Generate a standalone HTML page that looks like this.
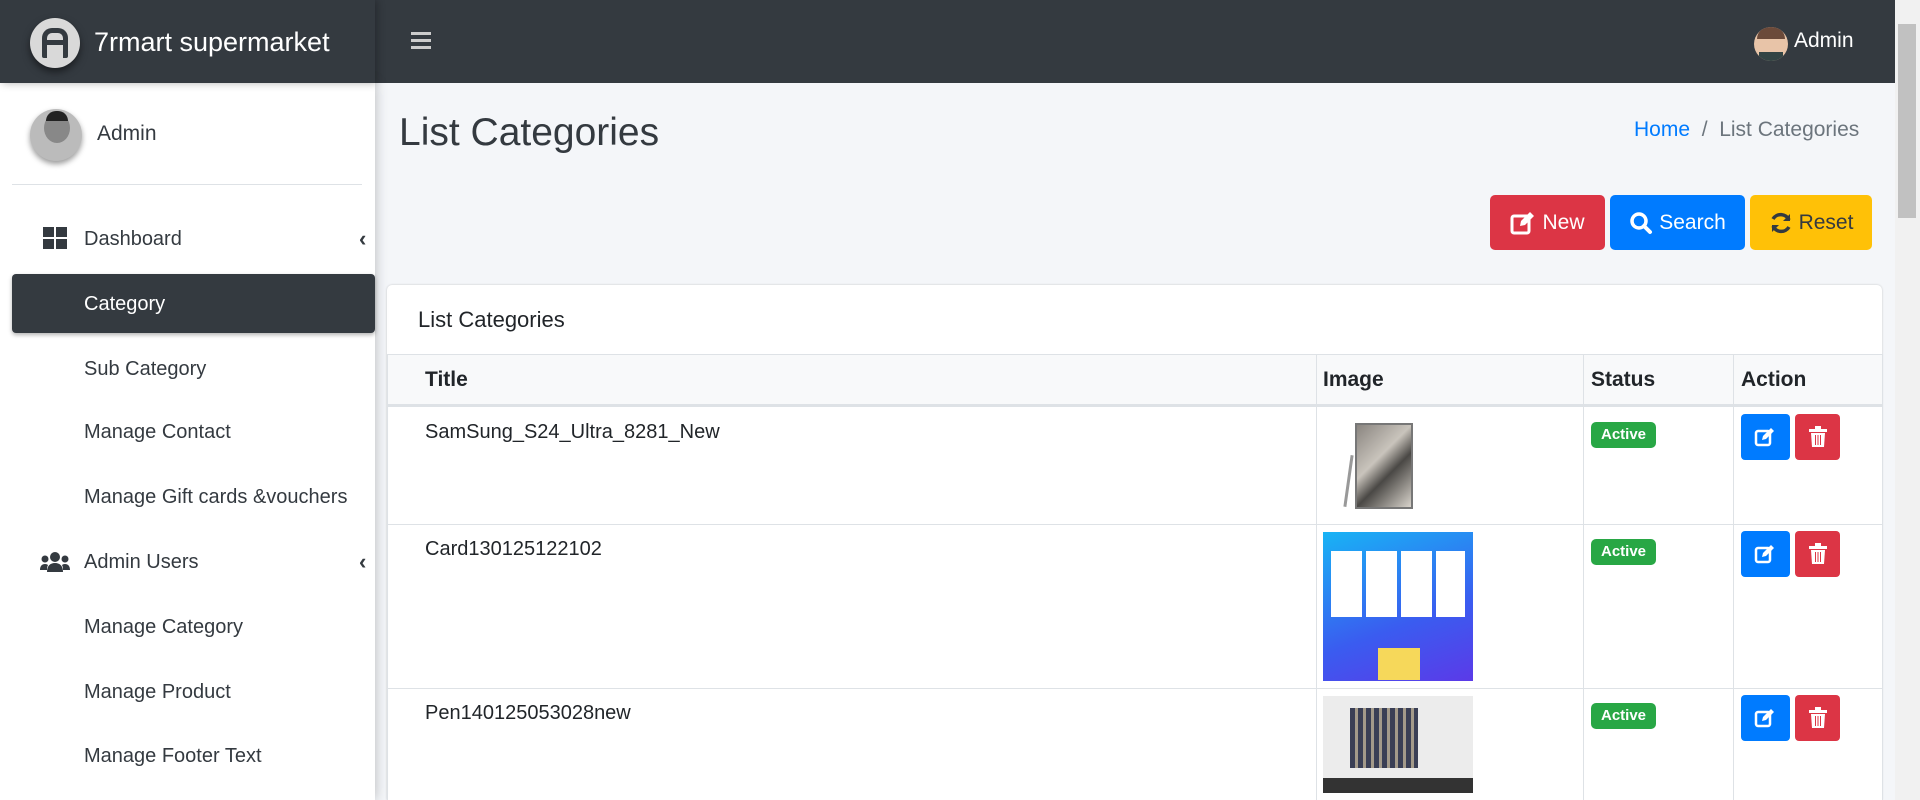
<!DOCTYPE html>
<html style="overflow:hidden;width:1920px;height:800px"><head><meta charset="utf-8"><style>
*{box-sizing:border-box;margin:0;padding:0}
body{width:1920px;height:800px;overflow:hidden;background:#f4f6f9;font-family:"Liberation Sans",sans-serif;color:#212529;position:relative}
.abs{position:absolute}
.nav{left:0;top:0;width:1895px;height:83px;background:#343a40}
.side{left:0;top:83px;width:375px;height:717px;background:#fff;box-shadow:0 0 12px rgba(0,0,0,.25)}
.brandbar{left:0;top:0;width:375px;height:83px;background:#343a40;box-shadow:2px 0 8px rgba(0,0,0,.3)}
.mi{position:absolute;left:84px;font-size:20px;color:#343a40;line-height:24px}
.btn{position:absolute;top:195px;height:55px;border-radius:5px;color:#fff;font-size:21px;display:flex;align-items:center;justify-content:center;gap:6px}
.th{position:absolute;top:354px;height:51px;font-weight:bold;font-size:21px;line-height:51px}
.vl{position:absolute;width:1px;background:#dee2e6}
.hl{position:absolute;height:1px;background:#dee2e6;left:387px;width:1495px}
.badge{position:absolute;left:1591px;width:65px;height:26px;background:#28a745;color:#fff;border-radius:5px;font-weight:bold;font-size:15px;text-align:center;line-height:26px}
.eb{position:absolute;left:1741px;width:49px;height:46px;background:#007bff;border-radius:4px}
.db{position:absolute;left:1795px;width:45px;height:46px;background:#dc3545;border-radius:4px}
.rt{position:absolute;left:425px;font-size:20px}
</style></head><body>
<div class="abs nav"></div>
<div class="abs" style="left:387px;top:285px;width:1495px;height:515px;background:#fff;border-radius:5px 5px 0 0;box-shadow:0 0 2px rgba(0,0,0,.2)"></div>
<div class="abs side"></div>
<div class="abs brandbar"></div>
<div class="abs" style="left:30px;top:18px;width:50px;height:50px;border-radius:50%;background:#d9d9d9;box-shadow:0 4px 8px rgba(0,0,0,.5)"></div>
<div class="abs" style="left:42px;top:28px;width:26px;height:30px;border:5px solid #343a40;border-radius:10px 10px 2px 2px;border-bottom:none"></div>
<div class="abs" style="left:45px;top:40px;width:20px;height:5px;background:#343a40"></div>
<div class="abs" style="left:94px;top:27px;font-size:27px;color:#fff">7rmart supermarket</div>
<div class="abs" style="left:411px;top:32px;width:20px;height:3px;background:#ccc;box-shadow:0 7px 0 #ccc,0 14px 0 #ccc"></div>
<div class="abs" style="left:1754px;top:27px;width:34px;height:34px;border-radius:50%;background:#e8c4a8;overflow:hidden"><div style="position:absolute;top:0;left:3px;width:28px;height:12px;background:#6b4a3a;border-radius:14px 14px 0 0"></div><div style="position:absolute;bottom:0;left:5px;width:24px;height:9px;background:#344"></div></div>
<div class="abs" style="left:1794px;top:29px;font-size:21px;color:#fff">Admin</div>
<div class="abs" style="left:1895px;top:0;width:25px;height:800px;background:#f1f1f1"></div>
<div class="abs" style="left:1898px;top:24px;width:18px;height:194px;background:#c1c1c1"></div>

<div class="abs" style="left:30px;top:109px;width:52px;height:52px;border-radius:50%;background:#bbb;box-shadow:0 3px 6px rgba(0,0,0,.4);overflow:hidden"><div style="position:absolute;left:14px;top:4px;width:26px;height:30px;border-radius:50%;background:#888"></div><div style="position:absolute;left:16px;top:2px;width:22px;height:10px;background:#222;border-radius:10px 10px 0 0"></div></div>
<div class="abs" style="left:97px;top:122px;font-size:21px;color:#343a40">Admin</div>
<div class="abs" style="left:12px;top:184px;width:350px;height:1px;background:#dee2e6"></div>

<svg class="abs" style="left:43px;top:227px" width="24" height="22"><rect x="0" y="0" width="11" height="10" fill="#343a40"/><rect x="13" y="0" width="11" height="10" fill="#343a40"/><rect x="0" y="12" width="11" height="10" fill="#343a40"/><rect x="13" y="12" width="11" height="10" fill="#343a40"/></svg>
<div class="mi" style="top:227px">Dashboard</div>
<div class="abs" style="left:359px;top:226px;font-size:22px;font-weight:bold;color:#343a40">&#8249;</div>
<div class="abs" style="left:12px;top:274px;width:363px;height:59px;background:#343a40;border-radius:4px;box-shadow:0 2px 4px rgba(0,0,0,.3)"></div>
<div class="mi" style="top:292px;color:#fff">Category</div>
<div class="mi" style="top:357px">Sub Category</div>
<div class="mi" style="top:420px">Manage Contact</div>
<div class="mi" style="top:485px">Manage Gift cards &amp;vouchers</div>
<svg class="abs" style="left:40px;top:551px" width="30" height="22" fill="#343a40"><circle cx="15" cy="6" r="5"/><circle cx="5" cy="8" r="3.5"/><circle cx="25" cy="8" r="3.5"/><path d="M7 21c0-6 3-9 8-9s8 3 8 9z"/><path d="M0 19c0-4 2-6 5-6 2 0 3 1 3 1-1 2-1 3-1 5z"/><path d="M30 19c0-4-2-6-5-6-2 0-3 1-3 1 1 2 1 3 1 5z"/></svg>
<div class="mi" style="top:550px">Admin Users</div>
<div class="abs" style="left:359px;top:549px;font-size:22px;font-weight:bold;color:#343a40">&#8249;</div>
<div class="mi" style="top:615px">Manage Category</div>
<div class="mi" style="top:680px">Manage Product</div>
<div class="mi" style="top:744px">Manage Footer Text</div>

<div class="abs" style="left:399px;top:111px;font-size:39px;color:#343a40">List Categories</div>
<div class="abs" style="left:1634px;top:118px;font-size:21px;color:#6c757d"><span style="color:#007bff">Home</span> &nbsp;/&nbsp; List Categories</div>

<div class="btn" style="left:1490px;width:115px;background:#dc3545"><svg width="26" height="24" viewBox="0 0 26 24"><rect x="2" y="5" width="17" height="17" rx="2" fill="none" stroke="#fff" stroke-width="3"/><path d="M10 15l1-5 9-9 4 4-9 9z" fill="#fff"/></svg>New</div>
<div class="btn" style="left:1610px;width:135px;background:#007bff"><svg width="24" height="24"><circle cx="10" cy="10" r="7" fill="none" stroke="#fff" stroke-width="3.5"/><path d="M15 15l6 6" stroke="#fff" stroke-width="4" stroke-linecap="round"/></svg>Search</div>
<div class="btn" style="left:1750px;width:122px;background:#ffc107;color:#343a40"><svg width="24" height="24" viewBox="0 0 24 24" fill="none" stroke="#343a40" stroke-width="3.5"><path d="M20 9A9 9 0 0 0 4 8"/><path d="M4 15a9 9 0 0 0 16 1"/><path d="M21 3v7h-7" stroke-width="0" fill="#343a40"/><path d="M3 21v-7h7" stroke-width="0" fill="#343a40"/></svg>Reset</div>

<div class="abs" style="left:418px;top:307px;font-size:22px;color:#212529">List Categories</div>
<div class="abs" style="left:387px;top:354px;width:1495px;height:51px;background:#f8f9fa"></div>
<div class="hl" style="top:354px"></div>
<div class="hl" style="top:404px;height:3px"></div>
<div class="hl" style="top:524px"></div>
<div class="hl" style="top:688px"></div>
<div class="vl" style="left:387px;top:354px;height:446px"></div>
<div class="vl" style="left:1316px;top:354px;height:446px"></div>
<div class="vl" style="left:1583px;top:354px;height:446px"></div>
<div class="vl" style="left:1733px;top:354px;height:446px"></div>
<div class="vl" style="left:1882px;top:354px;height:446px"></div>
<div class="th" style="left:425px">Title</div>
<div class="th" style="left:1323px">Image</div>
<div class="th" style="left:1591px">Status</div>
<div class="th" style="left:1741px">Action</div>

<div class="rt" style="top:421px">SamSung_S24_Ultra_8281_New</div>
<div class="rt" style="top:538px">Card130125122102</div>
<div class="rt" style="top:702px">Pen140125053028new</div>

<div class="abs" style="left:1355px;top:423px;width:58px;height:86px;background:linear-gradient(135deg,#8a8580,#c9c4bc 40%,#4a4845 60%,#d8d3cb);border:2px solid #777"></div>
<div class="abs" style="left:1347px;top:455px;width:3px;height:52px;background:#999;transform:rotate(8deg)"></div>
<div class="abs" style="left:1323px;top:532px;width:150px;height:149px;background:linear-gradient(160deg,#18b4f5,#3a5cf0 60%,#5b3ae8)"></div>
<div class="abs" style="left:1331px;top:551px;width:134px;height:66px;background:repeating-linear-gradient(90deg,#fff 0 31px,transparent 31px 35px)"></div>
<div class="abs" style="left:1378px;top:648px;width:42px;height:32px;background:#f6d85a"></div>
<div class="abs" style="left:1323px;top:696px;width:150px;height:97px;background:#ececec"></div>
<div class="abs" style="left:1350px;top:708px;width:68px;height:60px;background:repeating-linear-gradient(90deg,#3a3f55 0 5px,#a39a8a 5px 8px)"></div>
<div class="abs" style="left:1323px;top:778px;width:150px;height:15px;background:#333"></div>

<div class="badge" style="top:422px">Active</div>
<div class="badge" style="top:539px">Active</div>
<div class="badge" style="top:703px">Active</div>

<div class="eb" style="top:414px"></div><div class="db" style="top:414px"></div>
<div class="eb" style="top:531px"></div><div class="db" style="top:531px"></div>
<div class="eb" style="top:695px"></div><div class="db" style="top:695px"></div>
<svg class="abs" style="left:1754px;top:426px" width="24" height="22"><rect x="2" y="5" width="14" height="14" rx="2" fill="none" stroke="#fff" stroke-width="2.5"/><path d="M8 14l1-4 8-8 3 3-8 8z" fill="#fff"/></svg>
<svg class="abs" style="left:1754px;top:543px" width="24" height="22"><rect x="2" y="5" width="14" height="14" rx="2" fill="none" stroke="#fff" stroke-width="2.5"/><path d="M8 14l1-4 8-8 3 3-8 8z" fill="#fff"/></svg>
<svg class="abs" style="left:1754px;top:707px" width="24" height="22"><rect x="2" y="5" width="14" height="14" rx="2" fill="none" stroke="#fff" stroke-width="2.5"/><path d="M8 14l1-4 8-8 3 3-8 8z" fill="#fff"/></svg>
<svg class="abs" style="left:1808px;top:426px" width="20" height="22"><rect x="1" y="3" width="18" height="3" fill="#fff"/><rect x="7" y="0" width="6" height="3" fill="#fff"/><path d="M3 7h14l-1 14H4z" fill="#fff"/><path d="M7.5 9v10M10 9v10M12.5 9v10" stroke="#dc3545" stroke-width="1"/></svg>
<svg class="abs" style="left:1808px;top:543px" width="20" height="22"><rect x="1" y="3" width="18" height="3" fill="#fff"/><rect x="7" y="0" width="6" height="3" fill="#fff"/><path d="M3 7h14l-1 14H4z" fill="#fff"/><path d="M7.5 9v10M10 9v10M12.5 9v10" stroke="#dc3545" stroke-width="1"/></svg>
<svg class="abs" style="left:1808px;top:707px" width="20" height="22"><rect x="1" y="3" width="18" height="3" fill="#fff"/><rect x="7" y="0" width="6" height="3" fill="#fff"/><path d="M3 7h14l-1 14H4z" fill="#fff"/><path d="M7.5 9v10M10 9v10M12.5 9v10" stroke="#dc3545" stroke-width="1"/></svg>
</body></html>
